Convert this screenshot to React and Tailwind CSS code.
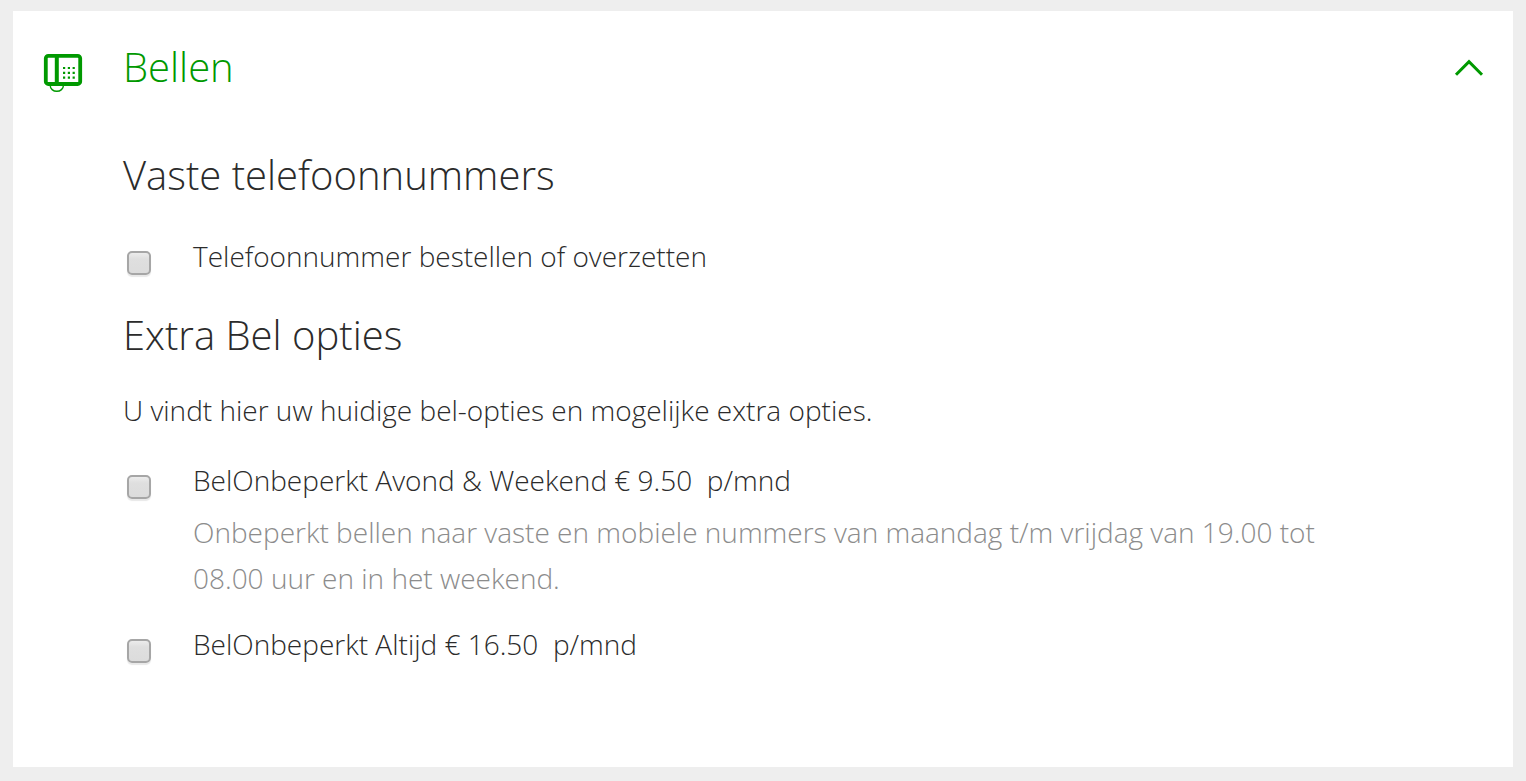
import React, { useState } from 'react';

const phoneOptions = [
  { id: 'nummer', label: 'Telefoonnummer bestellen of overzetten' }
];

const extraOptions = [
  {
    id: 'avond-weekend',
    label: 'BelOnbeperkt Avond & Weekend € 9.50 \u00a0p/mnd',
    description: 'Onbeperkt bellen naar vaste en mobiele nummers van maandag t/m vrijdag van 19.00 tot 08.00 uur en in het weekend.'
  },
  { id: 'altijd', label: 'BelOnbeperkt Altijd € 16.50 \u00a0p/mnd' }
];

const PhoneIcon = () => (
  <svg width="40" height="40" viewBox="0 0 40 40" fill="none" stroke="currentColor" aria-hidden="true">
    <rect x="2.8" y="3.8" width="34.4" height="28.2" rx="2.5" strokeWidth="3.8" />
    <path d="M13.8 3.5V32" strokeWidth="4" />
    <path d="M7.2 33.5a6.6 5.8 0 0 0 13.2 0" strokeWidth="1.4" />
    <path
      d="M20 16h2.2M24.8 16h2.2M29.6 16h2.2M20 20.8h2.2M24.8 20.8h2.2M29.6 20.8h2.2M20 25.6h2.2M24.8 25.6h2.2M29.6 25.6h2.2"
      strokeWidth="2.2"
    />
  </svg>
);

const ChevronUp = () => (
  <svg width="30" height="20" viewBox="0 0 30 20" fill="none" stroke="currentColor" strokeWidth="3" aria-hidden="true">
    <path d="M2 17.8L15 4.6L28 17.8" />
  </svg>
);

const Option = ({ option, checked, onChange }) => (
  <div className="flex items-start gap-[42px] pl-1">
    <input
      id={option.id}
      type="checkbox"
      checked={checked}
      onChange={() => onChange(option.id)}
      className="mt-[18px] size-6 shrink-0 appearance-none rounded-[5px] border-2 border-[#a6a6a6] bg-linear-to-b from-[#ececec] via-[#dfdfdf] via-30% to-[#dcdcdc] shadow-[0_2px_1px_#e8e8e8] checked:from-[#009900] checked:via-[#009000] checked:to-[#008800]"
    />
    <div>
      <label htmlFor={option.id}>{option.label}</label>
      {option.description && <p className="mt-[6px] text-[#8c8c8c]">{option.description}</p>}
    </div>
  </div>
);

const App = () => {
  const [open, setOpen] = useState(true);
  const [selected, setSelected] = useState({});

  const toggle = (id) => {
    setSelected(prev => ({ ...prev, [id]: !prev[id] }));
  };

  return (
    <main className="min-h-screen bg-[#eeeeee] px-[13px] pt-[11px] pb-[14px] font-['Open_Sans','Noto_Sans',sans-serif] text-[28px] leading-[46px] font-light text-[#2b2b2b]">
      <section className="bg-white pt-7 pb-[100px]">
        <h1 className="text-[40px] leading-[56px] text-[#009900]">
          <button
            type="button"
            aria-expanded={open}
            onClick={() => setOpen(!open)}
            className="flex w-full items-center pr-[29px] pl-[30px] text-left"
          >
            <span className="mt-[10px] w-20 shrink-0"><PhoneIcon /></span>
            <span className="flex-1">Bellen</span>
            <span className={open ? '' : 'rotate-180'}><ChevronUp /></span>
          </button>
        </h1>

        {open && (
          <div className="mt-[52px] pr-[150px] pl-[110px]">
            <h2 className="mb-[30px] text-[40px] leading-[56px]">Vaste telefoonnummers</h2>
            {phoneOptions.map(option => (
              <Option key={option.id} option={option} checked={!!selected[option.id]} onChange={toggle} />
            ))}

            <h2 className="mt-7 mb-6 text-[40px] leading-[56px]">Extra Bel opties</h2>
            <p className="mb-6">U vindt hier uw huidige bel-opties en mogelijke extra opties.</p>
            <div className="flex flex-col gap-5">
              {extraOptions.map(option => (
                <Option key={option.id} option={option} checked={!!selected[option.id]} onChange={toggle} />
              ))}
            </div>
          </div>
        )}
      </section>
    </main>
  );
};

export default App;
